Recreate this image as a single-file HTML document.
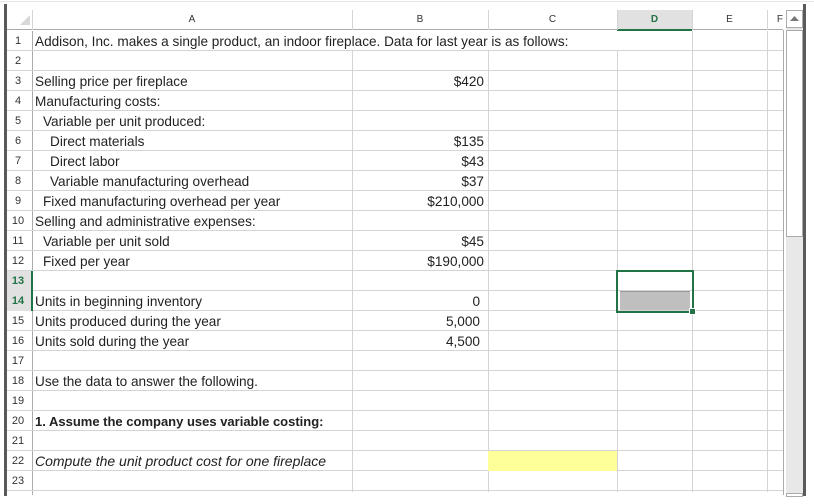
<!DOCTYPE html><html><head><style>
body{margin:0;width:814px;height:504px;background:#fff;position:relative;overflow:hidden;font-family:"Liberation Sans",sans-serif;}
.a{position:absolute;box-sizing:border-box}
.t{position:absolute;font-size:13.6px;color:#222;white-space:nowrap;line-height:21px}
.rn{position:absolute;left:7px;width:22px;text-align:center;font-size:11px;color:#333;line-height:21px}
.h{position:absolute;top:10px;height:20px;line-height:20px;text-align:center;font-size:10px;color:#333}
</style></head><body>
<div class="a" style="left:0;top:1px;width:814px;height:1px;background:#e6e6e6"></div>
<div class="a" style="left:4px;top:4px;width:3px;height:492px;background:#5a5a5a"></div>
<div class="a" style="left:7px;top:10px;width:776px;height:20px;background:#fff;border-bottom:1px solid #ababab"></div>
<div class="a" style="left:617px;top:10px;width:75px;height:21px;background:#e1e1e1;border-bottom:2px solid #217346"></div>
<svg class="a" style="left:20px;top:15px" width="10" height="10"><polygon points="10,0 10,10 0,10" fill="#d8d8d8"/></svg>
<div class="h" style="left:32px;width:320px">A</div>
<div class="h" style="left:352px;width:136px">B</div>
<div class="h" style="left:488px;width:129px">C</div>
<div class="h" style="left:617px;width:75px;color:#217346;font-weight:bold">D</div>
<div class="h" style="left:692px;width:75px">E</div>
<div class="h" style="left:767px;width:16px;text-align:right">F</div>
<svg class="a" style="left:0;top:0" width="814" height="504">
<g stroke="#d4d4d4" stroke-width="1">
<line x1="32.5" y1="10" x2="32.5" y2="30"/><line x1="352.5" y1="10" x2="352.5" y2="30"/><line x1="488.5" y1="10" x2="488.5" y2="30"/><line x1="617.5" y1="10" x2="617.5" y2="30"/><line x1="692.5" y1="10" x2="692.5" y2="30"/><line x1="767.5" y1="10" x2="767.5" y2="30"/>
<line x1="352.5" y1="51" x2="352.5" y2="492"/><line x1="488.5" y1="51" x2="488.5" y2="492"/><line x1="617.5" y1="51" x2="617.5" y2="492"/><line x1="692.5" y1="31" x2="692.5" y2="492"/><line x1="767.5" y1="31" x2="767.5" y2="492"/>
</g>
<line x1="32.5" y1="31" x2="32.5" y2="495" stroke="#ababab"/>
<line x1="783.5" y1="30" x2="783.5" y2="495" stroke="#ababab"/>
</svg>
<div id="rows"></div>
<div class="a" style="left:7px;top:271px;width:25px;height:40px;background:#e1e1e1"></div>
<div class="a" style="left:31px;top:271px;width:2px;height:40px;background:#217346"></div>
<div class="a" style="left:786px;top:10px;width:17px;height:485px;background:#e8e8e8"></div>
<div class="a" style="left:786px;top:10px;width:17px;height:18px;background:#fff;border:1px solid #ababab"></div>
<svg class="a" style="left:790px;top:16px" width="9" height="6"><polygon points="4.5,0 9,5 0,5" fill="#777"/></svg>
<div class="a" style="left:786px;top:30px;width:17px;height:207px;background:#fff;border:1px solid #ababab"></div>
<div class="a" style="left:786px;top:493px;width:17px;height:4px;background:#fff;border:1px solid #ababab"></div>
<div class="a" style="left:803px;top:4px;width:3px;height:492px;background:#5a5a5a"></div>
<div class="a" style="left:488px;top:451px;width:129px;height:20px;background:#ffff99"></div>
<div class="a" style="left:620px;top:291px;width:70px;height:19px;background:#bfbfbf;border-top:1px solid #999"></div>
<div class="a" style="left:616px;top:270px;width:78px;height:43px;border:2px solid #217346"></div>
<div class="a" style="left:690px;top:309px;width:5px;height:5px;background:#217346;outline:1px solid #fff"></div>
<script>
var d=[[1,"Addison, Inc. makes a single product, an indoor fireplace. Data for last year is as follows:",0],[3,"Selling price per fireplace",0,"$420"],[4,"Manufacturing costs:",0],[5,"Variable per unit produced:",8],[6,"Direct materials",15,"$135"],[7,"Direct labor",15,"$43"],[8,"Variable manufacturing overhead",15,"$37"],[9,"Fixed manufacturing overhead per year",8,"$210,000"],[10,"Selling and administrative expenses:",0],[11,"Variable per unit sold",8,"$45"],[12,"Fixed per year",8,"$190,000"],[14,"Units in beginning inventory",0,"","0"],[15,"Units produced during the year",0,"","5,000"],[16,"Units sold during the year",0,"","4,500"],[18,"Use the data to answer the following.",0],[20,"1. Assume the company uses variable costing:",0,"","","b"],[22,"Compute the unit product cost for one fireplace",0,"","","i"]];
var h="";
for(var r=1;r<=23;r++){var y=31+(r-1)*20;
h+='<div class="a" style="left:7px;top:'+(y+19)+'px;width:776px;height:1px;background:#d4d4d4"></div>';
h+='<div class="rn" style="top:'+y+'px;'+(r==13||r==14?'color:#217346;font-weight:bold;z-index:2':'')+'">'+r+'</div>';}
d.forEach(function(e){var y=31+(e[0]-1)*20;
var st=e[5]=="b"?"font-weight:bold;font-size:13px;":e[5]=="i"?"font-style:italic;font-size:14px;":"";
h+='<div class="t" style="left:'+(35+e[2])+'px;top:'+y+'px;'+st+'">'+e[1]+'</div>';
if(e[3])h+='<div class="t" style="left:352px;width:132px;text-align:right;top:'+y+'px">'+e[3]+'</div>';
if(e[4])h+='<div class="t" style="left:352px;width:128px;text-align:right;top:'+y+'px">'+e[4]+'</div>';});
document.getElementById("rows").innerHTML=h;
</script>
</body></html>
